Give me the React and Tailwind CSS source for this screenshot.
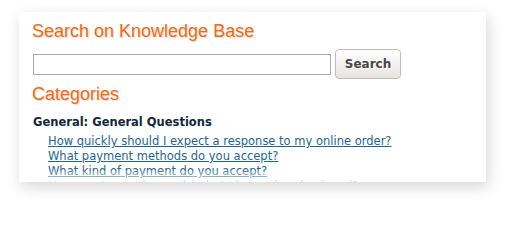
export default function App() {
    return (
        <div className="w-[507px] h-[209px] bg-white pt-[12px] pl-[19px]">
            <div className="relative w-[467px] h-[170px] bg-white overflow-hidden shadow-[2px_5px_14px_rgba(0,0,0,0.16)] pl-[13px] pt-[9px]">
                <h2 className="font-['Liberation_Sans',sans-serif] text-[18px] leading-[21px] text-[#f5690f] [text-shadow:1px_1px_1px_rgba(0,0,0,0.15)]">
                    Search on Knowledge Base
                </h2>
                <div className="flex items-center gap-[4px] mt-[7px] ml-[1px]">
                    <input type="text" className="w-[298px] h-[21px] border border-[#a9a9a9] bg-white" />
                    <button className="h-[30px] w-[66px] rounded-[4px] border border-[#bdbdbd] bg-gradient-to-b from-white to-[#e6e4e2] font-['DejaVu_Sans',sans-serif] font-bold text-[12px] text-[#474747] [text-shadow:1px_1px_0_#fff]">
                        Search
                    </button>
                </div>
                <h2 className="font-['Liberation_Sans',sans-serif] text-[18px] leading-[21px] text-[#f5690f] mt-[5px] [text-shadow:1px_1px_1px_rgba(0,0,0,0.15)]">
                    Categories
                </h2>
                <div className="font-['DejaVu_Sans',sans-serif] text-[11.5px] mt-[10px] ml-[1px]">
                    <div className="font-bold text-[#14283a] leading-[15px]">General: General Questions</div>
                    <ul className="pl-[15px] mt-[4px] leading-[15px]">
                        <li><a href="#" className="text-[#1f6591] underline">How quickly should I expect a response to my online order? </a></li>
                        <li><a href="#" className="text-[#1f6591] underline">What payment methods do you accept? </a></li>
                        <li><a href="#" className="text-[#1f6591] underline">What kind of payment do you accept? </a></li>
                        <li><a href="#" className="text-[#1f6591] underline">How can I cancel an order that I have already placed? </a></li>
                    </ul>
                </div>
                <div className="absolute left-0 right-0 bottom-0 h-[11px] bg-gradient-to-b from-white/20 to-white/80" />
            </div>
        </div>
    )
}
